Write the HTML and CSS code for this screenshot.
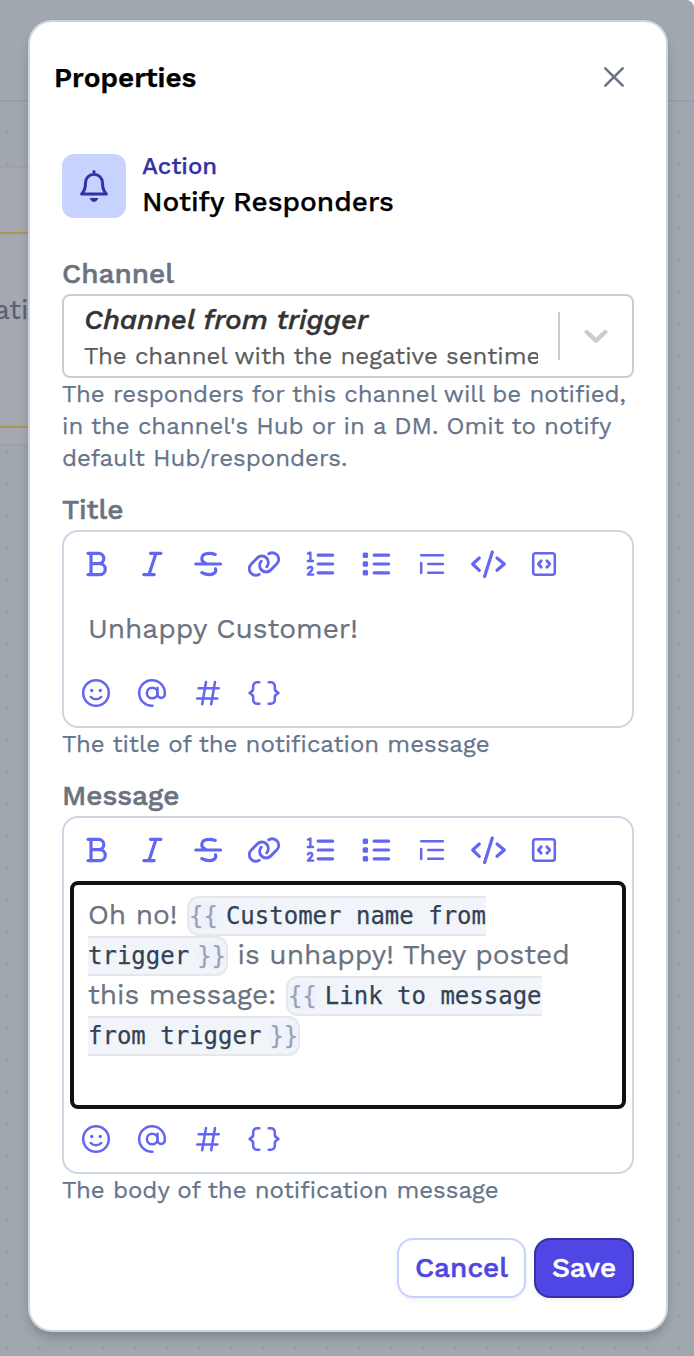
FILE: index.html
```html
<!DOCTYPE html>
<html lang="en">
<head>
<meta charset="utf-8">
<title>Properties</title>
<link rel="stylesheet" href="styles.css">
</head>
<body>
<svg class="sprite" aria-hidden="true">
  <symbol id="bold" viewBox="0 0 40 40"><path d="M12 9.300h10.600a5.200 5.200 0 0 1 0 10.400H15M22.600 19.700h1.200a5.400 5.400 0 0 1 0 10.900H12M15 9.300v21.300"/></symbol>
  <symbol id="italic" viewBox="0 0 40 40"><path d="M18.500 9.300h10.400M11.800 30.600h10.400M24 9.300l-7 21.300"/></symbol>
  <symbol id="strike" viewBox="0 0 40 40"><path d="M7.800 20h24.800M27.300 10.400c-2-.8-4-1.100-6.200-1.100-4.500 0-7.300 1.700-7.300 5 0 2.500 1.500 4.300 4.200 5.200M27.500 24.800c1.200 3.600-2 5.800-5.500 5.800-3 0-5.500-.5-8.200-2"/></symbol>
  <symbol id="link" viewBox="0 0 40 40"><path class="chain" d="M15.300 30.200c-2.900 1.700-6.100 1.100-8.200-1a6.400 6.400 0 0 1 0-9l6.300-6.300a6.400 6.400 0 0 1 9 0c2.400 2.400 2.500 6 .4 8.900M24.700 9.800c2.900-1.700 6.100-1.100 8.200 1a6.400 6.400 0 0 1 0 9l-6.300 6.300a6.400 6.400 0 0 1-9 0c-2.400-2.400-2.500-6-.4-8.900"/></symbol>
  <symbol id="ordered" viewBox="0 0 40 40"><path d="M18.200 11.200h14.400M18.200 20h14.400M18.200 28.800h14.400"/><path class="digit" d="M8 9.600l2.400-1v8M7.800 17h5.200M7.800 24.300c1.200-2 4.600-1.600 4.500.6-.1 1.800-2.800 3.300-4.400 5.700h5.300"/></symbol>
  <symbol id="bullets" viewBox="0 0 40 40"><path d="M18.200 11.200h14.400M18.200 20h14.400M18.200 28.800h14.400"/><g class="solid"><rect x="6.700" y="8.500" width="5.400" height="5.400" rx="1.500"/><rect x="6.700" y="17.300" width="5.400" height="5.400" rx="1.500"/><rect x="6.700" y="26.100" width="5.400" height="5.400" rx="1.500"/></g></symbol>
  <symbol id="quote" viewBox="0 0 40 40"><path class="thin" d="M9.200 11.200h21.700M16.200 20h14.700M16.200 28.800h14.700M9.200 19v10"/></symbol>
  <symbol id="code" viewBox="0 0 40 40"><path d="M11.300 14l-6.600 6 6.600 6.300M29 14l7.300 6-7.300 6.300M24.300 8l-7.700 24.500"/></symbol>
  <symbol id="codebox" viewBox="0 0 40 40"><rect class="thin" x="9.200" y="9.200" width="21.600" height="21.600" rx="2.500"/><path class="mid" d="M17.200 16.800L14.400 20l2.800 3.200M22.900 16.800l2.800 3.200-2.800 3.200"/></symbol>
  <symbol id="smile" viewBox="0 0 40 40"><circle class="thin" cx="20" cy="20" r="12.800"/><path class="thin" d="M14.800 24c2.700 3 7.700 3 10.400 0"/><g class="solid"><circle cx="15.700" cy="17.500" r="1.700"/><circle cx="24.300" cy="17.500" r="1.700"/></g></symbol>
  <symbol id="at" viewBox="0 0 40 40"><circle class="thin" cx="20.200" cy="20" r="5.300"/><path class="thin" d="M20.500 32.800A12.800 12.800 0 1 1 32.800 20v1.300a3.650 3.650 0 0 1-7.300 0v-6.500"/></symbol>
  <symbol id="hash" viewBox="0 0 40 40"><path class="thin" d="M10.600 15.200h20.200M9.200 25.500h20.200M18 9l-3.800 22.300M27 9l-3.800 22.300"/></symbol>
  <symbol id="braces" viewBox="0 0 40 40"><path class="thin" d="M15.300 9.200H13a3.800 3.800 0 0 0-3.800 3.800v2.800c0 1.800-.6 2.200-3.700 4.200 3.100 2 3.700 2.400 3.700 4.200V27a3.800 3.800 0 0 0 3.800 3.800h2.300M24.700 9.200H27a3.800 3.800 0 0 1 3.800 3.800v2.800c0 1.800.6 2.200 3.700 4.200-3.100 2-3.700 2.400-3.700 4.200V27a3.800 3.800 0 0 1-3.800 3.800h-2.300"/></symbol>
</svg>

<div class="app">
  <div class="topbar"></div>
  <div class="canvas">
    <div class="node"><div class="node-body"><span>ati</span></div></div>
  </div>
</div>

<main class="dialog">
  <header class="dialog-head">
    <h1>Properties</h1>
    <svg class="close" viewBox="0 0 24 24"><path d="M3.300 3.300l17.400 17.400M20.700 3.300L3.300 20.700"/></svg>
  </header>

  <section class="summary">
    <div class="tile">
      <svg viewBox="0 0 40 40"><path d="M7.600 28.100h24.800l-2.100-3c-1.600-2.400-1.800-4-1.800-8.300a8.500 8.500 0 0 0-17 0c0 4.300-.2 5.900-1.800 8.300zM20 5.500V8"/><path class="clapper" d="M15.900 32.100h8.200c-.4 2.500-2 3.800-4.100 3.800s-3.700-1.300-4.100-3.800z"/></svg>
    </div>
    <div>
      <div class="kind">Action</div>
      <div class="name">Notify Responders</div>
    </div>
  </section>

  <section class="field">
    <div class="label">Channel</div>
    <div class="select">
      <div class="value">
        <div class="choice">Channel from trigger</div>
        <div class="detail">The channel with the negative sentime</div>
      </div>
      <div class="divider"></div>
      <svg class="caret" viewBox="0 0 24 16"><path d="M2.700 4l9.300 8.600L21.300 4"/></svg>
    </div>
    <div class="help">The responders for this channel will be notified,<br>in the channel's Hub or in a DM. Omit to notify<br>default Hub/responders.</div>
  </section>

  <section class="field">
    <div class="label">Title</div>
    <div class="editor">
      <div class="tools"><svg><use href="#bold"/></svg><svg><use href="#italic"/></svg><svg><use href="#strike"/></svg><svg><use href="#link"/></svg><svg><use href="#ordered"/></svg><svg><use href="#bullets"/></svg><svg><use href="#quote"/></svg><svg><use href="#code"/></svg><svg><use href="#codebox"/></svg></div>
      <div class="text">Unhappy Customer!</div>
      <div class="tools foot"><svg><use href="#smile"/></svg><svg><use href="#at"/></svg><svg><use href="#hash"/></svg><svg><use href="#braces"/></svg></div>
    </div>
    <div class="help">The title of the notification message</div>
  </section>

  <section class="field">
    <div class="label">Message</div>
    <div class="editor">
      <div class="tools"><svg><use href="#bold"/></svg><svg><use href="#italic"/></svg><svg><use href="#strike"/></svg><svg><use href="#link"/></svg><svg><use href="#ordered"/></svg><svg><use href="#bullets"/></svg><svg><use href="#quote"/></svg><svg><use href="#code"/></svg><svg><use href="#codebox"/></svg></div>
      <div class="text focused">Oh no! <span class="chip"><i class="open">{{</i>Customer name from<br>trigger<i class="shut">}}</i></span> is unhappy! They posted<br>this message: <span class="chip"><i class="open">{{</i>Link to message<br>from trigger<i class="shut">}}</i></span></div>
      <div class="tools foot"><svg><use href="#smile"/></svg><svg><use href="#at"/></svg><svg><use href="#hash"/></svg><svg><use href="#braces"/></svg></div>
    </div>
    <div class="help">The body of the notification message</div>
  </section>

  <footer class="actions">
    <button class="cancel">Cancel</button>
    <button class="save">Save</button>
  </footer>
</main>
</body>
</html>
```

FILE: styles.css
```css
* { box-sizing: border-box; }
body {
  margin: 0;
  width: 694px;
  height: 1356px;
  overflow: hidden;
  position: relative;
  background: #fff;
  font-family: "Work Sans", Inter, "Noto Sans", sans-serif;
  -webkit-text-stroke: .25px;
}
.sprite { position: absolute; width: 0; height: 0; }

/* Dimmed workflow canvas */
.app {
  height: 1356px;
  display: flex;
  flex-direction: column;
  background: #a0a7ae;
  border-top-right-radius: 8px;
  overflow: hidden;
}
.topbar { height: 102px; border-bottom: 2px solid #969eac; }
.canvas {
  flex: 1;
  position: relative;
  background: radial-gradient(circle, #959daa 1.700px, transparent 2.300px) -9px 14px / 32px 32px;
}
.node {
  position: absolute;
  left: 0;
  top: 64px;
  width: 60px;
  height: 280px;
  padding-top: 64px;
  background: #a5a8b0;
  border-top: 2px solid #9aa1af;
  border-bottom: 2px solid #9aa1af;
}
.node-body {
  height: 196px;
  padding-top: 60px;
  border-top: 2px solid #a99650;
  border-bottom: 2px solid #a99650;
  color: #576378;
  font-size: 28px;
  line-height: 32px;
}
.node-body span { margin-left: -6px; }

/* Dialog */
.dialog {
  position: absolute;
  left: 28px;
  top: 20px;
  width: 640px;
  height: 1312px;
  padding: 0 32px;
  background: #fff;
  border: 2px solid #cbd5e1;
  border-radius: 24px;
  box-shadow: 0 8px 12px -2px rgba(0, 0, 0, .14), 0 4px 8px rgba(0, 0, 0, .06);
}
.dialog-head {
  height: 110px;
  margin: 0 8px 0 -8px;
  display: flex;
  align-items: center;
  justify-content: space-between;
}
h1 { margin: 0; font-size: 28px; font-weight: 600; color: #000; }
.close { width: 24px; height: 24px; fill: none; stroke: #6b7280; stroke-width: 2.600; stroke-linecap: round; }
.summary { display: flex; gap: 16px; height: 64px; margin: 22px 0 36px; }
.tile {
  width: 64px;
  height: 64px;
  border-radius: 12px;
  background: #c7d2fe;
  display: grid;
  place-items: center;
}
.tile svg { width: 40px; height: 40px; fill: none; stroke: #3730a3; stroke-width: 3; stroke-linejoin: round; stroke-linecap: round; }
.tile .clapper { fill: #3730a3; stroke: none; }
.kind { margin-top: -4px; line-height: 32px; font-size: 24px; font-weight: 500; color: #3730a3; }
.name { line-height: 40px; font-size: 28px; font-weight: 500; color: #000; white-space: nowrap; }

.field { margin-bottom: 16px; }
.label { height: 40px; line-height: 40px; font-size: 28px; font-weight: 500; color: #6b7280; -webkit-text-stroke: .5px; }
.help { line-height: 32px; font-size: 24px; color: #64748b; white-space: nowrap; }

.select {
  height: 84px;
  display: flex;
  align-items: center;
  border: 2px solid #ccc;
  border-radius: 8px;
}
.value { width: 454px; margin-left: 20px; overflow: hidden; white-space: nowrap; }
.choice { line-height: 40px; font-size: 28px; font-weight: 500; font-style: italic; color: #333; -webkit-text-stroke: .4px; }
.detail { line-height: 32px; font-size: 24px; color: #5c5c5c; }
.divider { width: 2px; height: 48px; margin-left: 20px; background: #ccc; }
.caret { width: 24px; height: 16px; margin-left: 24px; fill: none; stroke: #ccc; stroke-width: 4.400; stroke-linecap: round; stroke-linejoin: round; }

/* Rich text editor */
.editor { border: 2px solid #cbd5e1; border-radius: 16px; }
.tools { height: 64px; padding-left: 4px; display: flex; align-items: center; }
.tools svg {
  width: 40px;
  height: 40px;
  margin: 0 8px;
  overflow: visible;
  fill: none;
  stroke: #6366f1;
  stroke-width: 3.200;
  stroke-linecap: round;
  stroke-linejoin: round;
}
.tools.foot { height: 66px; }
.thin { stroke-width: 2.500; }
.mid, .chain { stroke-width: 2.900; }
.digit { stroke-width: 2.400; }
.solid { fill: #6366f1; stroke: none; }
.text { padding: 13px 24px 11px; line-height: 40px; font-size: 28px; color: #6b7280; white-space: nowrap; }
.focused {
  height: 228px;
  margin: -1px 6px -3px;
  padding: 10px 14px;
  border: 4px solid #111;
  border-radius: 8px;
}
.chip {
  padding: 4px 0;
  border: 2px solid #e5e7eb;
  border-radius: 12px;
  background: #f1f5f9;
  color: #334155;
  font: 24px/1 "DejaVu Sans Mono", monospace;
}
.chip i { font-style: normal; color: #9ca3af; background: #eef2ff; border-radius: 10px; }
.open { margin-right: 8px; }
.shut { margin-left: 8px; }

.actions { margin-top: 32px; display: flex; justify-content: flex-end; gap: 8px; }
button {
  height: 60px;
  padding: 0 0 2px;
  font: 500 28px "Work Sans", Inter, "Noto Sans", sans-serif;
  border-radius: 16px;
  box-shadow: 0 2px 4px rgba(0, 0, 0, .06);
  -webkit-text-stroke: .5px;
}
.cancel { width: 129px; background: #fff; border: 2px solid #c7d2fe; color: #4f46e5; }
.save { width: 100px; background: #4f46e5; border: 2px solid #3730a3; color: #fff; }
```
